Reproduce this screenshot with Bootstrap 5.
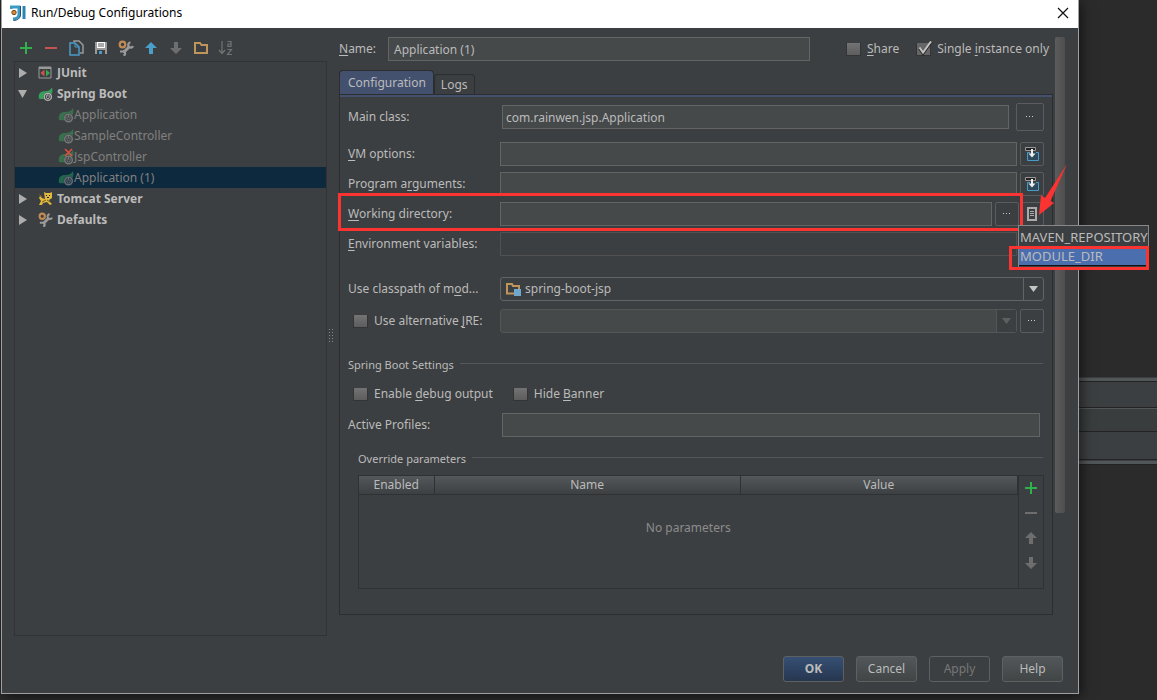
<!DOCTYPE html>
<html lang="en">
<head>
<meta charset="utf-8">
<meta name="viewport" content="width=device-width, initial-scale=1">
<title>Run/Debug Configurations</title>
<link href="https://cdn.jsdelivr.net/npm/bootstrap@5.3.0/dist/css/bootstrap.min.css" rel="stylesheet">
<style>
:root{--pane:#3c3f41;--field:#45494a;--edge:#646464;--dark:#2b2d2f;--text:#bbbbbb;--red:#fb3331}
body{background:#2b2b2b;color:var(--text);font-family:"Noto Sans","Open Sans",sans-serif;font-size:12px;line-height:18px}
u{text-underline-offset:2px}
button,input,select{font:inherit;color:inherit}
svg{display:block;flex:none}
.desktop{min-height:100vh;padding-left:1px}
.dialog-window{min-width:0;margin-bottom:6px;background:var(--pane);border:1px solid #a0a0a0;border-top:0;box-shadow:2px 2px 12px #0009;z-index:1}
.title-bar{height:28px;background:#fff;color:#000;padding:0 8px;gap:5px}
.title-bar h1{font-size:12px;line-height:24px;margin:0 0 2px;font-weight:400}
.plain-btn{background:none;border:0;padding:0;color:inherit}
.backdrop{width:78px;flex:none;padding-top:377px}
.backdrop div{background:#3c3f41;border-bottom:1px solid #232323}
.backdrop .edge-bar{height:5px;background:#515658;border-top:1px solid #3c3f41}
.work-area{padding:9px 13px 0 12px}
.main-pane{min-width:0}
.side-pane{width:313px;flex:none}
.tool-strip{height:24px;margin-left:-1px}
.tool-strip button{width:25px;height:22px;display:grid;place-items:center}
.tree-box{border:1px solid #313335;margin:0}
.tree-box li{height:21px;padding-left:3px;display:flex;align-items:center}
.tree-box .twist{width:16px}
.tree-box .group-row{font-weight:700;gap:4px}
.tree-box .leaf-row{padding-left:43px;color:#808080}
.tree-box .leaf-row svg{opacity:.5}
.tree-box .leaf-row .err{opacity:1;position:absolute;left:6px;top:-1px}
.tree-box .chosen{background:#0d293e}
.grip{width:12px;flex:none;padding:0 0 0 2px;margin-top:292px;height:14px}
.grip i{width:4px;height:14px;background:repeating-linear-gradient(#888 0 1px,transparent 1px 3px);-webkit-mask:repeating-linear-gradient(90deg,#000 0 1px,transparent 1px 3px);mask:repeating-linear-gradient(90deg,#000 0 1px,transparent 1px 3px)}
.scroll-thumb{width:10px;flex:none;height:476px;margin-left:2px;border-radius:2px;background:linear-gradient(90deg,#5c5c5c,#4e4e4e)}
.txt{height:24px;min-width:0;flex:1;background:var(--field);border:1px solid var(--edge);padding:0 3px;border-radius:0;outline:0}
.name-row .txt{padding:0 5px}
.name-row .opt{display:flex;align-items:center;gap:4px;margin-left:16px}
.name-row .tick{margin-right:0}
.txt.off{background:var(--pane);border-color:#515151}
.tick{appearance:none;flex:none;width:17px;height:17px;margin:0 4px 0 1px;background:no-repeat url("data:image/svg+xml,%3Csvg xmlns='http://www.w3.org/2000/svg' width='17' height='17'%3E%3ClinearGradient id='g' x2='0' y2='1'%3E%3Cstop stop-color='%23737373'/%3E%3Cstop offset='1' stop-color='%235d5d5d'/%3E%3C/linearGradient%3E%3Cpath d='M0 2h15v13H0z' fill='%23323436'/%3E%3Cpath d='M1 2h13v12H1z' fill='url(%23g)'/%3E%3C/svg%3E")}
.tick:checked{background-image:url("data:image/svg+xml,%3Csvg xmlns='http://www.w3.org/2000/svg' width='17' height='17'%3E%3Cpath d='M0 2h15v13H0z' fill='%23323436'/%3E%3Cpath d='M1 2h13v12H1z' fill='%23666'/%3E%3Cpath d='M3.500 7.500l3.500 5 8-11' fill='none' stroke='%23222' stroke-width='2.500'/%3E%3Cpath d='M3.500 6.500l3.500 5 8-11' fill='none' stroke='%23c4c4c4' stroke-width='2'/%3E%3C/svg%3E")}
.tab-strip{margin-top:10px;height:23px}
.tab-strip button{border:1px solid var(--dark);border-bottom:0;border-radius:4px 4px 0 0;background:var(--pane);padding:0 6px;height:20px;line-height:20px}
.tab-strip .current{height:24px;padding:0 7px 0 8px;background:#43516f;line-height:22px}
.tab-panel{border:1px solid var(--dark);padding:8px 8px 25px}
.tab-panel::before{content:"";display:block;height:2px;margin:-8px -8px 6px;background:#43516f}
.form-line{display:flex;align-items:center;min-height:24px;gap:3px;margin-bottom:6px;position:relative}
.form-line>label:first-child{width:149px;flex:none}
.wide-line{gap:7px;min-height:28px;margin-bottom:11px}
.wide-line>label:first-child{width:147px}
.sq{width:24px;height:24px;flex:none;border:1px solid #5a5c5d;border-radius:2px;background:var(--pane);padding:0;display:grid;place-items:center}
.wide-line .sq{width:28px;height:28px}
.pick{height:24px;flex:1;border:1px solid var(--edge);border-radius:3px;display:flex;align-items:center;padding-left:4px;gap:3px;min-width:0}
.pick select{appearance:none;background:none;border:0;outline:0;flex:1;min-width:0;padding:0}
.pick .drop{width:20px;height:22px;border-left:1px solid var(--edge);display:grid;place-items:center;pointer-events:none}
.pick.off{background:var(--field);border-color:#555}
.pick.off .drop{background:var(--pane);border-color:#555}
.section-line{display:flex;gap:6px;font-size:11px;height:18px;margin:0;font-weight:400;line-height:18px}
.section-line::after{content:"";flex:1;height:1px;margin:7px 1px 0 0;background:#54585a}
.params{margin:7px 0 0 10px;border:1px solid #2f3133;min-height:114px}
.params table{width:100%;table-layout:fixed}
.params th{height:18px;padding:0;font-weight:400;text-align:center;line-height:17px;background:linear-gradient(#54585b,#3d4042);border-right:1px solid #2f3133;border-bottom:1px solid #2f3133}
.params td{padding:24px 0 0;text-align:center;color:#8c8c8c}
.params .side-tools{width:26px;border-left:1px solid #2f3133}
.side-tools button{height:25px;width:24px;padding-bottom:2px;display:grid;place-items:center}
.mark-box{position:absolute;border:3px solid var(--red);pointer-events:none}
.mark-dir{left:-10px;right:21px;top:-9px;height:38px}
.mark-arrow{position:absolute;right:-24px;top:-39px;pointer-events:none;z-index:3}
.macro-menu{position:absolute;left:calc(100% - 26px);top:23px;width:131px;border:1px solid #888;background:var(--pane);padding:2px 0;z-index:2;font-size:13px}
.macro-menu button{display:block;width:100%;text-align:left;padding:0 1px;height:19px;line-height:19px;white-space:nowrap}
.macro-menu .hot{background:#4b6eaf;line-height:18px;border-bottom:1px solid #111}
.mark-item{left:-10px;right:-1px;top:20px;height:24px}
.foot-bar{padding:20px 15px 11px;gap:12px}
.foot-bar button{width:61px;height:26px;border:1px solid #5e6162;border-radius:3px;background:linear-gradient(#525759,#414546);padding:0}
.foot-bar .main-act{background:linear-gradient(#365074,#26364f);font-weight:700}
.foot-bar button:disabled{background:var(--pane);color:#777}
</style>
</head>
<body>
<svg width="0" height="0" class="position-absolute">
<defs>
<symbol id="leaf" viewBox="0 0 16 16"><path d="M1 13C0 7 3 5 7 5c4 0 6-1 8-4 1 4 0 6-1 8-1 3-5 5-13 4z" fill="#35a25a"/><circle cx="10.500" cy="11" r="4.800" fill="#3c3f41"/><circle cx="10.500" cy="11" r="3.800" fill="none" stroke="#b0b0b0" stroke-width="1.500"/><path d="M9 9.300v2.200a1.500 1.500 0 0 0 3 0V9.300M10.500 8v2.500" fill="none" stroke="#b0b0b0"/></symbol>
<symbol id="wrench" viewBox="0 0 16 16"><circle cx="4.500" cy="4.500" r="2.800" fill="none" stroke="#c08a55" stroke-width="2.200"/><path d="M5.500 12.500l6-6" stroke="#9a9a9a" stroke-width="3"/><path d="M12.500 2.500a2.500 2.500 0 1 0 2.500 3.500M2 11.500h2.500a2 2 0 0 1 1 4" fill="none" stroke="#9a9a9a" stroke-width="2.200"/></symbol>
<symbol id="plus" viewBox="0 0 16 16"><path d="M8 2v12M2 8h12" stroke="#2fb24c" stroke-width="2"/></symbol>
<symbol id="up" viewBox="0 0 16 16"><path d="M8 2l6 6h-4v6H6V8H2z" fill="currentColor"/></symbol>
<symbol id="down" viewBox="0 0 16 16"><path d="M8 14L2 8h4V2h4v6h4z" fill="currentColor"/></symbol>
<symbol id="insert" viewBox="0 0 16 16"><path d="M1.500 1.500h10v3h-10z" fill="#222" stroke="#999"/><path d="M6 6.500H3.500v8h11v-8H12" fill="#2d4a5c" stroke="#4a9bc7"/><path d="M8 3v5" stroke="#eee" stroke-width="2"/><path d="M4.500 7.500h7L8 11.500z" fill="#eee"/></symbol>
<symbol id="dots" viewBox="0 0 10 4"><path d="M1 1h1v1H1zM4 1h1v1H4zM7 1h1v1H7z" fill="#ccc"/></symbol>
<symbol id="right" viewBox="0 0 10 10"><path d="M1 0l8 5-8 5z" fill="#adadad"/></symbol>
</defs>
</svg>

<div class="desktop d-flex">
<main class="dialog-window flex-grow-1 d-flex flex-column position-relative">
  <header class="title-bar d-flex align-items-center">
    <svg width="16" height="16" viewBox="0 0 16 16" style="margin-bottom:3px"><path d="M1 4V2h8v7c0 3.500-3 5-6 5" fill="none" stroke="#3b9ac6" stroke-width="3"/><path d="M14 1v13" stroke="#2c83b5" stroke-width="3"/><path d="M10.500 1v9c0 3-3 5.500-7 5.500" fill="none" stroke="#24506c"/><circle cx="4" cy="7.500" r="2.200" fill="#dc8b2c" stroke="#6d4a23"/></svg>
    <h1 class="flex-grow-1">Run/Debug Configurations</h1>
    <button class="plain-btn" aria-label="Close"><svg width="14" height="14" viewBox="0 0 14 14" style="margin-bottom:3px"><path d="M2 2l10 10M12 2L2 12" stroke="#111" stroke-width="1.200"/></svg></button>
  </header>

  <div class="work-area d-flex flex-grow-1">
    <aside class="side-pane d-flex flex-column">
      <div class="tool-strip d-flex">
        <button class="plain-btn" aria-label="Add"><svg width="16" height="16"><use href="#plus"/></svg></button>
        <button class="plain-btn" aria-label="Remove"><svg width="16" height="16"><path d="M2 8h12" stroke="#c75450" stroke-width="2"/></svg></button>
        <button class="plain-btn" aria-label="Copy"><svg width="16" height="16" fill="none"><path d="M6 2V1h5l4 4v8h-3" stroke="#999" stroke-width="1.500"/><path d="M2 3h5l4 4v8H2z" stroke="#4a9bc7" stroke-width="1.500"/><path d="M7 3v4h4" stroke="#4a9bc7"/></svg></button>
        <button class="plain-btn" aria-label="Save"><svg width="16" height="16"><path d="M2 2h12v12H2z" fill="#9a9a9a"/><path d="M4 2h8v6H4z" fill="#fff"/><path d="M5 4h6M5 6h6" stroke="#555"/><path d="M4 10h8v4H4z" fill="#3c3f41"/><path d="M6 11h3v3H6z" fill="#4a9bc7"/></svg></button>
        <button class="plain-btn" aria-label="Edit defaults"><svg width="16" height="16"><use href="#wrench"/></svg></button>
        <button class="plain-btn" aria-label="Move up" style="color:#4a9fca"><svg width="16" height="16"><use href="#up"/></svg></button>
        <button class="plain-btn" aria-label="Move down" style="color:#6e6e6e"><svg width="16" height="16"><use href="#down"/></svg></button>
        <button class="plain-btn" aria-label="New folder"><svg width="16" height="16"><path d="M2 13V3h5l1.500 2H14v8z" fill="none" stroke="#c0955c" stroke-width="2"/></svg></button>
        <button class="plain-btn" aria-label="Sort"><svg width="16" height="16" fill="none" stroke="#737373" stroke-width="1.200"><path d="M4 1v12M1 10l3 3.500L7 10M9.500 1.500h3.500V6.500h-3V4h3M9.500 9.500h4l-4 5h4.500"/></svg></button>
      </div>
      <ul class="tree-box list-unstyled flex-grow-1">
        <li class="group-row"><span class="twist"><svg width="10" height="10"><use href="#right"/></svg></span><svg width="15" height="13"><path d="M1 1h12v11H1z" fill="none" stroke="#999"/><path d="M1 2h12" stroke="#999" stroke-width="2"/><path d="M6.500 3.500v7L2.500 7z" fill="#d0534c"/><path d="M8 3.500v7L12 7z" fill="#35a755"/></svg>JUnit</li>
        <li class="group-row"><span class="twist"><svg width="10" height="10"><path d="M0 1h9L4.500 9z" fill="#adadad"/></svg></span><svg width="15" height="16"><use href="#leaf"/></svg>Spring Boot</li>
        <li class="leaf-row"><svg width="16" height="16"><use href="#leaf"/></svg>Application</li>
        <li class="leaf-row"><svg width="16" height="16"><use href="#leaf"/></svg>SampleController</li>
        <li class="leaf-row"><span class="position-relative"><svg width="16" height="16"><use href="#leaf"/></svg><svg class="err" width="10" height="10"><path d="M1 1l7 7M8 1L1 8" stroke="#e0523f" stroke-width="1.500"/></svg></span>JspController</li>
        <li class="leaf-row chosen"><svg width="16" height="16"><use href="#leaf"/></svg>Application (1)</li>
        <li class="group-row"><span class="twist"><svg width="10" height="10"><use href="#right"/></svg></span><svg width="15" height="15"><path d="M6 1l2 1h4l2-1v6l-3 2 1 2 2 2-2 1-3-3-4 1-1 2H1l2-4-2-3 1-2 2 2 3 1z" fill="#e0b93d"/><path d="M1 3l3 3M4 11l4-2M9 9l3 2" stroke="#7c5f1c"/><path d="M8 4h1v1H8zM11 4h1v1h-1zM9 6h2v1H9z" fill="#222"/></svg>Tomcat Server</li>
        <li class="group-row"><span class="twist"><svg width="10" height="10"><use href="#right"/></svg></span><svg width="15" height="15"><use href="#wrench"/></svg>Defaults</li>
      </ul>
    </aside>

    <div class="grip"><i class="d-block"></i></div>

    <section class="main-pane flex-grow-1">
      <div class="name-row d-flex align-items-center pe-1">
        <label for="cfg" style="width:49px"><u>N</u>ame:</label>
        <input id="cfg" class="txt" value="Application (1)">
        <span class="opt ms-4 ps-2"><input class="tick ms-1" type="checkbox" id="share"><label for="share"><u>S</u>hare</label></span>
        <span class="opt"><input class="tick" type="checkbox" id="single" checked><label for="single">Single <u>i</u>nstance only</label></span>
      </div>
      <div class="tab-strip d-flex align-items-end">
        <button class="current">Configuration</button><button>Logs</button>
      </div>
      <div class="tab-panel">
        <div class="form-line wide-line"><label for="mc">Main class:</label><input id="mc" class="txt" value="com.rainwen.jsp.Application"><button class="sq" aria-label="Browse"><svg width="10" height="4"><use href="#dots"/></svg></button></div>
        <div class="form-line"><label for="vm"><u>V</u>M options:</label><input id="vm" class="txt"><button class="sq" aria-label="Expand"><svg width="16" height="16"><use href="#insert"/></svg></button></div>
        <div class="form-line"><label for="pa">Program a<u>r</u>guments:</label><input id="pa" class="txt"><button class="sq" aria-label="Expand"><svg width="16" height="16"><use href="#insert"/></svg></button></div>
        <div class="form-line"><label for="wd"><u>W</u>orking directory:</label><input id="wd" class="txt"><button class="sq" aria-label="Browse"><svg width="10" height="4"><use href="#dots"/></svg></button><button class="sq" style="margin-left:-2px" aria-label="Insert macro"><svg width="16" height="16"><path d="M4 2h8v12H4z" fill="none" stroke="#aaa" stroke-width="2"/><path d="M6 5.500h4M6 7.500h4M6 9.500h4" stroke="#aaa"/></svg></button>
          <div class="macro-menu">
            <button class="plain-btn">MAVEN_REPOSITORY</button>
            <button class="plain-btn hot">MODULE_DIR</button>
            <span class="mark-box mark-item"></span>
          </div>
          <span class="mark-box mark-dir"></span>
          <svg class="mark-arrow" width="30" height="54"><path d="M29 1L12.500 38l3.500 2L1 52 3 32l4 3z" fill="#fb3331"/></svg>
        </div>
        <div class="form-line"><label for="ev"><u>E</u>nvironment variables:</label><input id="ev" class="txt off" readonly><button class="sq" aria-label="Browse"><svg width="10" height="4"><use href="#dots"/></svg></button></div>
        <div class="form-line" style="margin:21px 0 8px"><label for="cp">Use classpath of m<u>o</u>d...</label><span class="pick"><svg width="17" height="16"><path d="M2 12.500V3h5l1 2h6v7.500z" fill="none" stroke="#c0955c" stroke-width="2"/><path d="M9 8h7v7H9z" fill="#6fa8cc"/></svg><select id="cp"><option>spring-boot-jsp</option></select><span class="drop"><svg width="9" height="8"><path d="M0 1h9L4.500 7z" fill="#c4c4c4"/></svg></span></span></div>
        <div class="form-line" style="margin-bottom:23px"><label for="jre" class="d-flex align-items-center ps-1"><input id="jre" class="tick" type="checkbox">Use alternative&nbsp;<u>J</u>RE:</label><span class="pick off"><select aria-label="JRE" disabled><option></option></select><span class="drop"><svg width="9" height="8"><path d="M0 1h9L4.500 7z" fill="#5e6060"/></svg></span></span><button class="sq" aria-label="Browse"><svg width="10" height="4"><use href="#dots"/></svg></button></div>
        <h2 class="section-line">Spring Boot Settings</h2>
        <div class="d-flex align-items-center ps-1" style="margin:11px 0 10px"><input id="dbg" class="tick" type="checkbox"><label for="dbg">Enable <u>d</u>ebug output</label><input id="ban" class="tick" type="checkbox" style="margin-left:20px"><label for="ban">Hide <u>B</u>anner</label></div>
        <div class="form-line wide-line pe-1" style="min-height:24px;margin-bottom:13px"><label for="ap">Active Profiles:</label><input id="ap" class="txt"></div>
        <h2 class="section-line" style="margin-left:10px">Override parameters</h2>
        <div class="params d-flex">
          <div class="flex-grow-1"><table>
            <colgroup><col style="width:75px"><col style="width:46.500%"><col></colgroup>
            <thead><tr><th>Enabled</th><th>Name</th><th>Value</th></tr></thead>
            <tbody><tr><td colspan="3">No parameters</td></tr></tbody>
          </table></div>
          <div class="side-tools" style="color:#6e6e6e">
            <button class="plain-btn" aria-label="Add"><svg width="16" height="16"><use href="#plus"/></svg></button>
            <button class="plain-btn" aria-label="Remove"><svg width="16" height="16"><path d="M2 8h12" stroke="#6e6e6e" stroke-width="2"/></svg></button>
            <button class="plain-btn" aria-label="Move up"><svg width="16" height="16"><use href="#up"/></svg></button>
            <button class="plain-btn" aria-label="Move down"><svg width="16" height="16"><use href="#down"/></svg></button>
          </div>
        </div>
      </div>
    </section>
    <div class="scroll-thumb"></div>
  </div>

  <footer class="foot-bar d-flex justify-content-end">
    <button class="main-act">OK</button><button>Cancel</button><button disabled>Apply</button><button>Help</button>
  </footer>
</main>
<div class="backdrop">
  <div class="edge-bar"></div><div style="height:26px"></div><div style="height:24px;background:#393d3e;border-top:1px solid #515658"></div><div style="height:28px"></div><div class="edge-bar"></div>
</div>
</div>
<script src="https://cdn.jsdelivr.net/npm/bootstrap@5.3.0/dist/js/bootstrap.bundle.min.js"></script>
</body>
</html>
